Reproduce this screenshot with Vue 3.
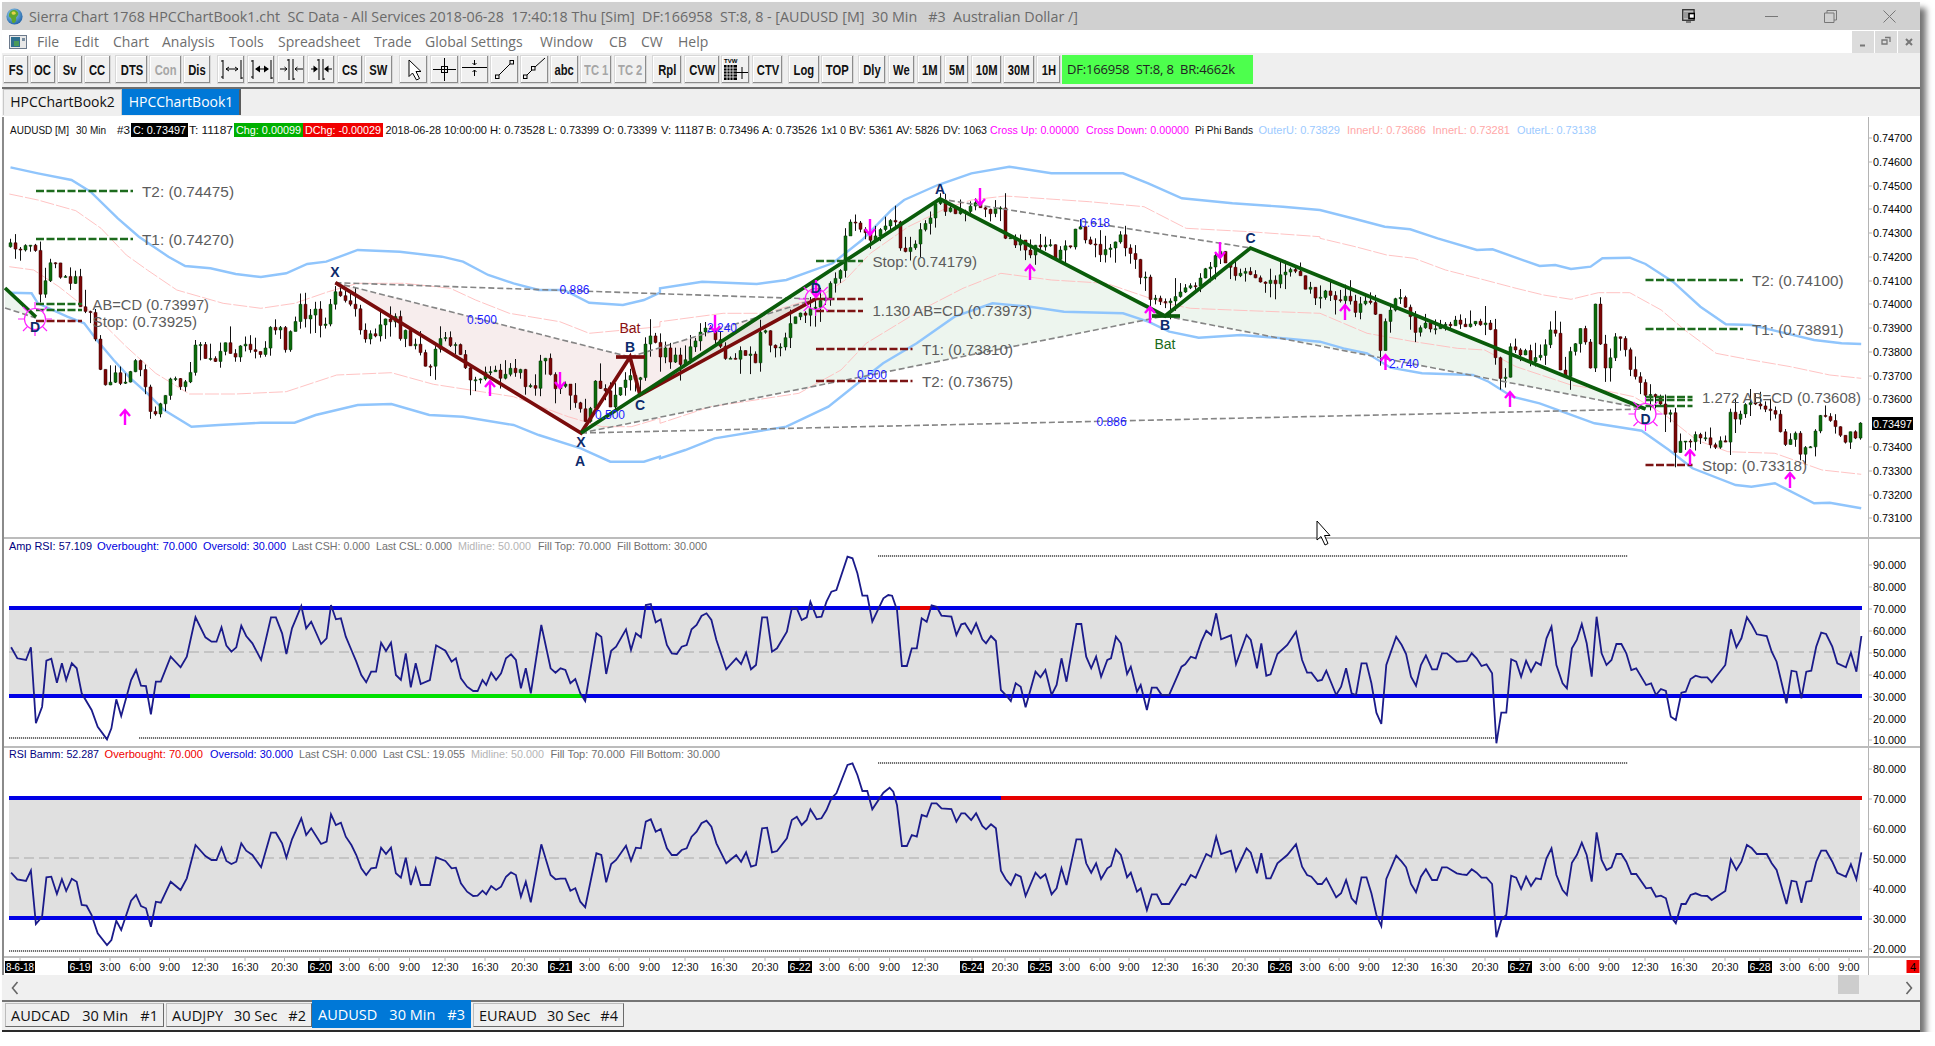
<template>
  <div class="window">
    <div class="titlebar">
      <svg class="globe" viewBox="0 0 16 16">
        <defs>
          <radialGradient id="sea" cx="0.4" cy="0.35" r="0.7">
            <stop offset="0" stop-color="#9fd8f0" />
            <stop offset="1" stop-color="#1c5fa8" />
          </radialGradient>
        </defs>
        <circle cx="8" cy="8" r="7.6" fill="url(#sea)" />
        <path d="M5 2.5C8 1 11 2.5 11.5 5S9 8 9.5 10 8 14.5 6.5 14 6 10 4 9 2.5 4.5 5 2.5Z" fill="#5fa62e" />
        <path d="M6 3.5C7.5 3 9 3.5 9.2 5S7 6.5 6 6 5 4 6 3.5Z" fill="#e6d24a" />
      </svg>
      <span class="title-text">{{ titleText }}</span>
      <div class="sys-buttons">
        <svg class="sys-monitor" viewBox="0 0 13 14">
          <rect x="0.7" y="0.7" width="11.4" height="10.6" fill="#bdbdbd" stroke="#333" stroke-width="1.3" />
          <path d="M3 3V9M5 3V9" stroke="#777" stroke-width="1" />
          <rect x="7" y="4.5" width="5.5" height="5" fill="#fff" stroke="#000" stroke-width="1.6" />
          <path d="M4 13H9" stroke="#444" stroke-width="1.2" />
        </svg>
        <svg class="sys-icon" viewBox="0 0 13 13"><path d="M0 6.5H13" stroke="#777" /></svg>
        <svg class="sys-icon" viewBox="0 0 13 13"><path d="M3 3V.5H12.5V10H10M.5 3H10V12.5H.5Z" fill="none" stroke="#777" /></svg>
        <svg class="sys-icon" viewBox="0 0 13 13"><path d="M.5 .5L12.5 12.5M12.5 .5L.5 12.5" stroke="#777" /></svg>
      </div>
    </div>

    <div class="menubar">
      <svg class="menu-icon" viewBox="0 0 18 14">
        <rect x="0.5" y="0.5" width="17" height="13" fill="#e8e8e8" stroke="#6c7a8c" />
        <rect x="2" y="2" width="9" height="10" fill="#2f6f8f" />
        <rect x="5" y="6" width="5" height="5" fill="#4a9a5a" />
        <rect x="13" y="3" width="3" height="3" fill="#7a8ea0" />
      </svg>
      <span v-for="m in menuItems" :key="m.label" class="menu-item" :style="{ width: m.w + 'px' }">{{ m.label }}</span>
      <div class="mdi-buttons">
        <div class="mdi-btn"><svg viewBox="0 0 22 22" width="22" height="22"><path d="M8 14.5H13" stroke="#777" stroke-width="2" /></svg></div>
        <div class="mdi-btn"><svg viewBox="0 0 22 22" width="22" height="22"><path d="M10 6.5H15V11M7 9H12V13H7Z" fill="none" stroke="#777" stroke-width="1.3" /></svg></div>
        <div class="mdi-btn"><svg viewBox="0 0 22 22" width="22" height="22"><path d="M8 8L14 14M14 8L8 14" stroke="#777" stroke-width="2" /></svg></div>
      </div>
    </div>

    <div class="toolbar">
      <div
        v-for="b in toolButtons"
        :key="b.id"
        class="tool-btn"
        :class="{ dim: b.dim }"
        :style="{ width: b.w + 'px', marginLeft: b.gap + 'px' }"
      >
        <span v-if="b.text" class="tool-label">{{ b.text }}</span>
        <svg v-else class="tool-icon" viewBox="0 0 29 29" width="29" height="29">
          <g v-if="b.icon === 'span'" stroke="#000" fill="none">
            <path d="M6 5V24M24 5V24M4 6H6M24 23H26M4 22H6" />
            <path d="M9 14H21M9 14L12 12M9 14L12 16M21 14L18 12M21 14L18 16" />
          </g>
          <g v-else-if="b.icon === 'spanBold'">
            <path d="M6 5V24M24 5V24M4 6H6M24 23H26M4 22H6M9 14H21" stroke="#000" fill="none" />
            <path d="M8 14L13 10.5V17.5ZM22 14L17 10.5V17.5Z" />
          </g>
          <g v-else-if="b.icon === 'pinch'" stroke="#000" fill="none">
            <path d="M12 4V25M16 4V25M10 5H12M16 24H18" />
            <path d="M3 14H10M10 14L7.5 12M10 14L7.5 16M26 14H18M18 14L20.5 12M18 14L20.5 16" />
          </g>
          <g v-else-if="b.icon === 'pinchBold'">
            <path d="M12 4V25M16 4V25M10 5H12M16 24H18M4 14H10M18 14H25" stroke="#000" fill="none" />
            <path d="M11 14L6.5 10.5V17.5ZM17 14L21.5 10.5V17.5Z" />
          </g>
          <path v-else-if="b.icon === 'pointer'" d="M10 5V21.5L13.5 18L17.5 25L20.5 23.5L17 16.5H22Z" fill="#fff" stroke="#000" />
          <g v-else-if="b.icon === 'cross'" stroke="#000" fill="none">
            <path d="M3 14.5H26M14.5 3V26" />
            <rect x="11.5" y="11.5" width="6" height="6" />
          </g>
          <g v-else-if="b.icon === 'level'" stroke="#000" fill="none">
            <path d="M2 12.5H27" />
            <path d="M14.5 5V10M14.5 10L12.5 8M14.5 10L16.5 8M14.5 21V15M14.5 15L12.5 17M14.5 15L16.5 17" />
          </g>
          <g v-else-if="b.icon === 'line'" stroke="#000" fill="none">
            <path d="M9 20L20 9" />
            <rect x="5.5" y="20" width="3.5" height="3.5" />
            <rect x="20" y="5.5" width="3.5" height="3.5" />
          </g>
          <g v-else-if="b.icon === 'ray'" stroke="#000" fill="none">
            <path d="M7 20L12 15M15 12L25 3" />
            <rect x="3.5" y="20" width="3.5" height="3.5" />
            <rect x="11.5" y="11.5" width="3.5" height="3.5" />
          </g>
          <g v-else-if="b.icon === 'table'">
            <text x="3" y="8" class="tvw">TVW</text>
            <rect x="3" y="10" width="13" height="15" />
            <path d="M3 13H16M3 16H16M3 19H16M3 22H16M6 10V25M9 10V25M12 10V25" stroke="#fff" stroke-width=".8" />
            <path d="M15 17.5H27M21 12V24" stroke="#000" />
          </g>
        </svg>
      </div>
      <div class="status-box">{{ statusText }}</div>
    </div>

    <div class="book-tabs">
      <div class="book-tab">HPCChartBook2</div>
      <div class="book-tab active">HPCChartBook1</div>
    </div>

    <div class="panes">
      <div class="pane">
        <svg class="chart" viewBox="4 117 1916 420" width="1916" height="420">
          <polygon v-for="(f, i) in fills" :key="'f' + i" :points="f.pts" :fill="f.color" />

          <polyline
            v-for="(b, i) in bands"
            :key="'b' + i"
            :points="b.pts"
            fill="none"
            :stroke="b.color"
            :stroke-width="b.width"
            :stroke-dasharray="b.dash"
          />

          <path :d="candles.wicks" stroke="#111" stroke-width="1" fill="none" />
          <path :d="candles.up" fill="#0b6b0b" stroke="#0a3a0a" stroke-width=".5" />
          <path :d="candles.down" fill="#7c0606" stroke="#3a0505" stroke-width=".5" />

          <line
            v-for="(d, i) in ratioLines"
            :key="'d' + i"
            :x1="d[0]" :y1="d[1]" :x2="d[2]" :y2="d[3]"
            stroke="#858585" stroke-width="1.6" stroke-dasharray="6 3"
          />

          <polyline v-for="(l, i) in legs" :key="'l' + i" :points="l.pts" fill="none" :stroke="l.color" stroke-width="3.7" />

          <line
            v-for="(t, i) in targets"
            :key="'t' + i"
            :x1="t[0]" :x2="t[1]" :y1="t[2]" :y2="t[2]"
            :stroke="t[3]" stroke-width="2.6" stroke-dasharray="8 2.5"
          />

          <g v-for="(s, i) in suns" :key="'s' + i" stroke="#ff20ff" stroke-width="1.2" fill="none">
            <circle :cx="s[0]" :cy="s[1]" r="10.5" />
            <path :d="sunRays(s[0], s[1])" />
          </g>

          <path
            v-for="(a, i) in arrows"
            :key="'a' + i"
            :d="arrowPath(a)"
            fill="none" stroke="#ff00ff" stroke-width="2.4"
          />

          <text
            v-for="(p, i) in pointLabels"
            :key="'p' + i"
            :x="p[0]" :y="p[1]"
            class="point-label"
          >{{ p[2] }}</text>
          <text x="630" y="328" class="bat" fill="#8a1010">Bat</text>
          <text x="1165" y="344" class="bat" fill="#1a6a1a">Bat</text>

          <text
            v-for="(r, i) in ratioLabels"
            :key="'r' + i"
            :x="r[0]" :y="r[1]"
            class="ratio-label"
            textLength="30" lengthAdjust="spacingAndGlyphs"
          >{{ r[2] }}</text>

          <text
            v-for="(t, i) in targetLabels"
            :key="'tl' + i"
            :x="t[0]" :y="t[2]"
            class="target-label"
            :textLength="t[1] - t[0]" lengthAdjust="spacingAndGlyphs"
          >{{ t[3] }}</text>

          <g v-for="(h, i) in mainBoxes" :key="'h' + i">
            <rect :x="h[0]" y="123" :width="h[1] - h[0]" height="14" :fill="h[2]" />
          </g>
          <text
            v-for="(h, i) in mainHeader"
            :key="'mh' + i"
            :x="h[0]" y="130"
            class="small-text"
            :fill="h[3] || '#111'"
            :textLength="h[1] - h[0]" lengthAdjust="spacingAndGlyphs"
          >{{ h[2] }}</text>

          <line x1="1868.5" x2="1868.5" y1="117" y2="537" class="axis-line" />
          <g v-for="(p, i) in priceScale" :key="'ps' + i">
            <line x1="1868" x2="1872" :y1="p[0]" :y2="p[0]" class="axis-line" />
            <text x="1873" :y="p[0]" class="small-text" textLength="39" lengthAdjust="spacingAndGlyphs">{{ p[1] }}</text>
          </g>
          <rect x="1872" y="417" width="41" height="13" fill="#000" />
          <text x="1873" y="424" class="small-text" fill="#fff" textLength="39" lengthAdjust="spacingAndGlyphs">0.73497</text>
        </svg>
      </div>

      <div v-for="pane in rsiPanes" :key="pane.id" class="pane">
        <svg class="chart" :viewBox="`4 ${pane.top} 1916 ${pane.height}`" width="1916" :height="pane.height">
          <rect x="9" :y="pane.hi" width="1851" :height="pane.lo - pane.hi" fill="#e0e0e0" />
          <line x1="9" x2="1860" :y1="pane.mid" :y2="pane.mid" stroke="#a8a8a8" stroke-width="1.2" stroke-dasharray="10 5" />
          <line
            v-for="(d, i) in pane.dotted"
            :key="'dot' + i"
            :x1="d[0]" :x2="d[1]" :y1="d[2]" :y2="d[2]"
            stroke="#707070" stroke-width="1.8" stroke-dasharray="1.2 .8"
          />
          <line
            v-for="(s, i) in pane.bars"
            :key="'bar' + i"
            :x1="s[0]" :x2="s[1]" :y1="s[2]" :y2="s[2]"
            :stroke="s[3]" stroke-width="4"
          />
          <polyline :points="pane.curve" fill="none" stroke="#1b1b8a" stroke-width="1.8" />

          <text
            v-for="(h, i) in pane.header"
            :key="'hd' + i"
            :x="h[0]" :y="pane.headY"
            class="small-text"
            :fill="h[3]"
            :textLength="h[1] - h[0]" lengthAdjust="spacingAndGlyphs"
          >{{ h[2] }}</text>

          <line x1="1868.5" x2="1868.5" :y1="pane.top" :y2="pane.top + pane.height" class="axis-line" />
          <g v-for="(p, i) in pane.scale" :key="'sc' + i">
            <line x1="1868" x2="1872" :y1="p[0]" :y2="p[0]" class="axis-line" />
            <text x="1873" :y="p[0]" class="small-text" textLength="33" lengthAdjust="spacingAndGlyphs">{{ p[1] }}</text>
          </g>
        </svg>
      </div>

      <svg class="chart time-axis" viewBox="4 958 1916 17" width="1916" height="17">
        <g v-for="(t, i) in timeLabels" :key="'tm' + i">
          <line :x1="t.x" :x2="t.x" y1="958" y2="961" class="axis-line" />
          <rect v-if="t.date" :x="t.x - t.w / 2" y="961" :width="t.w" height="12" fill="#000" />
          <text
            :x="t.x" y="967"
            class="small-text time-text"
            :fill="t.date ? '#fff' : '#111'"
            :textLength="t.len" lengthAdjust="spacingAndGlyphs"
          >{{ t.label }}</text>
        </g>
        <line x1="1868.5" x2="1868.5" y1="958" y2="975" class="axis-line" />
        <rect x="1906.5" y="960" width="13" height="13" fill="#f00000" />
        <text x="1913" y="967" class="small-text time-text">4</text>
      </svg>

      <svg class="mouse-cursor" viewBox="0 0 15 26" width="15" height="26">
        <path d="M1 1V20L5 16.5L9 25L12 23.5L8.5 15.5H14Z" fill="#fff" stroke="#000" />
      </svg>
    </div>

    <div class="scrollbar">
      <svg viewBox="0 0 8 14" width="8" height="14"><path d="M6.5 1L1.5 7L6.5 13" fill="none" stroke="#666" stroke-width="1.6" /></svg>
      <div class="scroll-thumb"></div>
      <svg viewBox="0 0 8 14" width="8" height="14"><path d="M1.5 1L6.5 7L1.5 13" fill="none" stroke="#666" stroke-width="1.6" /></svg>
    </div>

    <div class="sheet-tabs">
      <div
        v-for="t in sheetTabs"
        :key="t.num"
        class="sheet-tab"
        :class="{ active: t.active }"
        :style="{ width: t.w + 'px', marginLeft: t.gap + 'px' }"
      >
        <span>{{ t.sym }}</span><span>{{ t.period }}</span><span>{{ t.num }}</span>
      </div>
    </div>
  </div>
</template>

<script setup>
const titleText = 'Sierra Chart 1768 HPCChartBook1.cht  SC Data - All Services 2018-06-28  17:40:18 Thu [Sim]  DF:166958  ST:8, 8 - [AUDUSD [M]  30 Min   #3  Australian Dollar /]'
const statusText = 'DF:166958  ST:8, 8  BR:4662k'

// readings below were taken per crop of the screen, so each block has its own scale
const crop = (ox, oy, sx, sy) => (str) =>
  str.trim().split(/\s+/).map((p) => {
    const [x, y] = p.split(',').map(Number)
    return [ox + x / sx, oy + y / sy]
  })
const left = crop(0, 140, 2.376, 3)
const mid = crop(660, 140, 2.376, 3)
const right = crop(1320, 140, 2.55, 3)
const toPts = (arr) => arr.map(([x, y]) => `${x.toFixed(1)},${y.toFixed(1)}`).join(' ')

// ---- top bars
const menuAt = [
  ['File', 37], ['Edit', 74], ['Chart', 113], ['Analysis', 162], ['Tools', 229], ['Spreadsheet', 278],
  ['Trade', 374], ['Global Settings', 425], ['Window', 540], ['CB', 609], ['CW', 641], ['Help', 678], ['', 720],
]
const menuItems = menuAt.slice(0, -1).map(([label, x], i) => ({ label, w: menuAt[i + 1][1] - x }))

const toolAt = [
  ['FS', 3, 29], ['OC', 29.5, 56], ['Sv', 57, 83], ['CC', 84, 111],
  ['DTS', 115, 148], ['Con', 149, 182, 1], ['Dis', 183, 211],
  ['@span', 217, 245], ['@spanBold', 247, 275], ['@pinch', 277, 305], ['@pinchBold', 307, 335],
  ['CS', 337, 363], ['SW', 364, 393],
  ['@pointer', 399, 428], ['@cross', 430, 459], ['@level', 460, 489], ['@line', 490, 519], ['@ray', 520, 549],
  ['abc', 550, 579], ['TC 1', 580, 612, 1], ['TC 2', 614, 647, 1],
  ['Rpl', 652, 682], ['CVW', 684, 720], ['@table', 721, 750], ['CTV', 752, 783],
  ['Log', 788, 820], ['TOP', 821, 854],
  ['Dly', 858, 886], ['We', 888, 915], ['1M', 917, 942], ['5M', 944, 969], ['10M', 971, 1002], ['30M', 1003, 1035], ['1H', 1036, 1061],
]
const toolButtons = toolAt.map(([name, x1, x2, dim], i) => {
  const isIcon = name[0] === '@'
  return {
    id: name,
    text: isIcon ? '' : name,
    icon: isIcon ? name.slice(1) : '',
    dim: !!dim,
    w: x2 - x1,
    gap: i ? x1 - toolAt[i - 1][2] : 1,
  }
})

// ---- price pane
const trace = [
  ...left(`22,320 36,322 48,330 60,328 72,325 84,320 84,500 96,460 107,420 119,375 131,375 143,425 155,400 167,435 179,410 190,430 190,500 203,505 215,530 227,600 238,680 250,740 262,735 274,690 286,740 298,730 310,690 322,670 333,700 345,740 357,830 369,810 381,780 393,760 405,720 417,720 429,750 441,730 453,680 465,600 477,630 489,650 501,650 513,655 525,620 537,615 549,660 560,655 572,605 584,605 596,620 608,635 620,660 631,630 642,570 654,565 666,570 678,625 690,575 702,530 714,500 726,535 738,515 750,515 762,550 774,540 785,480 797,440 808,470 820,480 832,495 845,520 857,570 869,600 880,590 892,585 905,540 917,550 928,535 940,540 952,610 963,560 975,620 987,605 999,650 1011,670 1023,670 1035,620 1047,590 1058,605 1070,610 1082,625 1094,650 1105,690 1118,715 1130,715 1142,705 1153,700 1165,705 1177,700 1188,715 1200,700 1212,685 1223,690 1235,695 1247,745 1258,735 1270,750 1285,650 1296,660 1308,700 1320,750 1332,745 1344,740 1355,770 1367,785 1380,820 1392,840 1403,800 1415,720 1427,760 1439,760 1451,800 1463,750 1475,730 1487,720 1499,700 1510,720 1522,700 1533,610 1545,575 1557,600`),
  ...mid(`0,640 12,620 24,660 36,650 48,670 60,660 72,630 84,610 95,580 107,575 119,570 131,600 143,610 155,650 167,645 180,650 192,640 203,660 215,645 227,660 240,570 250,580 262,620 274,615 286,610 298,590 310,540 322,530 333,525 345,530 357,500 369,490 380,490 393,480 404,440 416,425 428,380 440,290 452,255 464,260 476,270 488,285 500,300 512,290 524,275 535,250 548,240 560,235 572,340 584,320 596,320 608,315 620,270 630,250 640,230 653,195 665,190 678,205 690,205 702,210 714,220 725,205 737,205 749,195 761,205 773,215 785,210 797,205 809,215 809,280 820,305 832,305 844,320 856,305 868,320 880,340 892,320 905,320 916,325 928,320 940,360 952,335 964,320 975,325 987,260 998,255 1010,310 1022,315 1035,320 1047,335 1060,340 1071,330 1083,290 1094,295 1106,330 1118,350 1130,360 1130,410 1141,405 1152,410 1165,490 1177,470 1190,490 1200,500 1212,490 1225,470 1237,450 1249,445 1261,440 1273,430 1285,415 1296,395 1308,390 1320,350 1332,345 1344,375 1355,375 1367,400 1380,400 1392,380 1403,395 1415,420 1427,430 1440,430 1452,425 1462,420 1474,405 1486,400 1498,385 1510,390 1521,400 1533,440 1545,440 1557,465`),
  ...right(`0,460 14,455 27,460 40,480 52,490 65,470 77,490 90,520 102,490 115,490 128,490 140,520 153,630 167,540 178,510 190,480 203,480 215,490 232,530 243,585 255,555 268,540 280,555 292,560 306,550 320,540 332,550 345,548 357,552 370,550 383,548 395,545 408,558 420,560 435,560 447,650 460,730 472,700 485,620 497,630 510,640 522,635 535,665 548,645 562,650 575,620 587,570 600,570 612,700 625,700 638,630 650,610 664,560 676,610 690,700 702,490 714,610 727,680 740,660 753,590 766,590 778,625 790,690 803,700 815,720 830,780 843,765 855,770 868,800 880,820 893,830 893,950 905,935 918,915 931,915 944,900 957,895 970,890 982,895 995,910 1008,915 1020,905 1033,900 1045,820 1058,830 1070,830 1085,790 1097,785 1110,795 1122,800 1135,800 1147,800 1160,830 1172,880 1187,910 1200,890 1212,890 1225,960 1237,925 1250,925 1262,870 1276,835 1288,835 1300,840 1314,860 1326,895 1338,900 1352,880 1365,900 1378,850`),
]

const traceAt = (x) => {
  for (let i = 1; i < trace.length; i++) {
    if (trace[i][0] >= x) {
      const [x0, y0] = trace[i - 1]
      const [x1, y1] = trace[i]
      return x1 === x0 ? y1 : y0 + ((y1 - y0) * (x - x0)) / (x1 - x0)
    }
  }
  return trace[trace.length - 1][1]
}

let seed = 17
const rnd = () => {
  seed = (seed * 16807) % 2147483647
  return seed / 2147483647
}

const buildCandles = () => {
  let wicks = ''
  let up = ''
  let down = ''
  let prev = traceAt(10)
  for (let x = 10; x <= 1860; x += 5) {
    const close = traceAt(x) + (rnd() - 0.5) * 8
    const top = Math.min(prev, close)
    const bot = Math.max(prev, close)
    const px = Math.round(x) + 0.5
    wicks += `M${px} ${(top - rnd() * rnd() * 20).toFixed(1)}V${(bot + rnd() * rnd() * 20).toFixed(1)}`
    const body = `M${px - 1.5} ${top.toFixed(1)}h3v${Math.max(bot - top, 1).toFixed(1)}h-3Z`
    if (close < prev) up += body
    else down += body
    prev = close
  }
  return { wicks, up, down }
}
const candles = buildCandles()

const bands = [
  {
    color: '#90c5fc', width: 2.4,
    pts: toPts([
      ...left(`25,82 90,100 170,120 215,155 280,235 330,290 400,350 440,378 500,385 560,402 620,411 680,400 730,372 775,365 850,330 950,335 1050,350 1100,365 1160,405 1220,430 1280,450 1340,450 1400,488 1480,495 1530,480 1568,458`),
      ...mid(`0,445 100,425 230,432 300,420 410,370 480,300 550,210 580,180 660,135 740,100 830,80 930,100 1100,100 1160,130 1240,175 1360,190 1480,200 1568,210`),
      ...right(`0,210 90,237 165,260 230,268 300,295 400,330 440,328 560,378 600,375 640,387 690,380 720,355 790,353 830,372 900,425 970,500 1035,553 1100,555 1170,575 1260,600 1330,610 1380,612`),
    ]),
  },
  {
    color: '#90c5fc', width: 2.4,
    pts: toPts([
      ...left(`22,458 75,460 90,490 160,530 200,550 230,600 270,660 310,715 350,760 390,810 455,860 520,855 620,848 700,848 750,825 850,795 930,792 1020,825 1100,830 1220,855 1280,885 1380,925 1450,965 1530,965 1568,950`),
      ...mid(`0,955 60,930 130,895 300,860 400,800 470,730 530,670 610,610 700,530 790,490 880,500 960,515 1100,520 1160,545 1210,575 1280,593 1380,585 1480,595 1568,605`),
      ...right(`0,605 60,625 120,640 180,683 260,700 390,705 430,725 490,770 560,790 630,820 700,850 820,872 890,930 950,985 1060,1035 1100,1040 1160,1030 1260,1090 1300,1088 1380,1105`),
    ]),
  },
  {
    color: '#ffbcbc', width: 0.9, dash: '14 2',
    pts: toPts([
      ...left(`22,162 90,180 180,212 240,265 300,345 350,390 420,450 530,490 620,505 700,490 780,455 850,430 960,430 1070,445 1130,480 1210,520 1330,545 1400,580 1568,560`),
      ...mid(`0,545 150,520 250,520 380,470 440,420 500,340 590,260 680,205 740,180 820,168 1020,185 1150,200 1250,265 1400,275 1568,290`),
      ...right(`0,295 90,320 170,345 240,355 320,390 420,420 500,445 570,465 640,478 710,458 790,458 870,510 930,570 1010,640 1090,658 1200,680 1300,705 1380,715`),
    ]),
  },
  {
    color: '#ffbcbc', width: 0.9, dash: '14 2',
    pts: toPts([
      ...left(`22,380 80,390 140,440 220,520 300,620 370,700 450,762 560,762 680,755 800,705 930,698 1030,733 1220,770 1350,830 1430,860 1500,860 1568,835`),
      ...mid(`0,850 120,800 200,785 330,760 430,690 490,610 620,510 720,445 810,400 930,420 1060,430 1200,490 1260,505 1400,512 1568,520`),
      ...right(`0,520 120,580 240,605 350,625 420,630 500,680 640,735 720,750 800,770 880,825 960,900 1040,935 1160,940 1280,990 1380,1003`),
    ]),
  },
]

const RX = [335.4, 282.7]
const RA = [581, 433]
const RB = [630, 357]
const RC = [640, 395]
const RD = [815.7, 299]
const GX = [581, 433]
const GA = [940, 199]
const GB = [1165, 316]
const GC = [1250.5, 248]
const GD = [1645.5, 409]

const fills = [
  { pts: toPts([RX, RA, RB]), color: 'rgba(170,60,60,.09)' },
  { pts: toPts([RB, RC, RD]), color: 'rgba(170,60,60,.09)' },
  { pts: toPts([GX, GA, GB]), color: 'rgba(60,140,70,.09)' },
  { pts: toPts([GB, GC, GD]), color: 'rgba(60,140,70,.09)' },
  { pts: toPts([[5, 288], [36, 317], [5, 308]]), color: 'rgba(60,140,70,.09)' },
]

const ratioLines = [
  [...RX, ...RB], [...RX, ...RD], [...RA, ...RC], [...RB, ...RD],
  [...GX, ...GB], [...GX, ...GD], [...GA, ...GC], [...GB, ...GD],
  [5, 308, 36, 318],
]

const legs = [
  { color: '#7a0c0c', pts: toPts([RX, RA, RB, RC, RD]) },
  { color: '#0a5c0a', pts: toPts([GX, GA, GB, GC, GD]) },
  { color: '#0a5c0a', pts: toPts([[5, 288], [36, 317]]) },
  { color: '#7a0c0c', pts: toPts([[616, 357], [645, 357]]) },
  { color: '#0a5c0a', pts: toPts([[1152, 316], [1180, 316]]) },
]

const G = '#1d6b1d'
const R = '#7c1414'
const targets = [
  [36, 133, 191, G], [36, 133, 239, G], [36, 82, 304, G], [36, 82, 310, G], [36, 82, 321, R],
  [816, 863, 261, G], [816, 863, 299, R], [816, 863, 311, R], [816, 912.5, 349, R], [816, 912.5, 381, R],
  [1645.5, 1743, 280, G], [1645.5, 1743, 329, G], [1645.5, 1692.5, 397, G], [1645.5, 1692.5, 400, G], [1645.5, 1692.5, 406, G], [1645.5, 1692.5, 465, R],
]

const targetLabels = [
  [142, 234, 191, 'T2: (0.74475)'], [142, 234, 239, 'T1: (0.74270)'],
  [92.6, 209, 304, 'AB=CD (0.73997)'], [92.6, 197, 321, 'Stop: (0.73925)'],
  [872.5, 977, 261, 'Stop: (0.74179)'], [872.5, 1032, 310, '1.130 AB=CD (0.73973)'],
  [922, 1013, 349, 'T1: (0.73810)'], [922, 1013, 381, 'T2: (0.73675)'],
  [1752, 1843.5, 280, 'T2: (0.74100)'], [1752, 1843.5, 329, 'T1: (0.73891)'],
  [1702, 1861, 397, '1.272 AB=CD (0.73608)'], [1702, 1807, 465, 'Stop: (0.73318)'],
]

const suns = [[35, 319], [815.7, 299], [1645.5, 414]]

const sunRays = (cx, cy) => {
  let d = ''
  for (let i = 0; i < 8; i++) {
    const a = (i * Math.PI) / 4
    const c = Math.cos(a)
    const s = Math.sin(a)
    d += `M${(cx + c * 10).toFixed(1)} ${(cy + s * 10).toFixed(1)}L${(cx + c * 17).toFixed(1)} ${(cy + s * 17).toFixed(1)}`
  }
  return d
}

// [x, top y, bottom y, points up]
const arrows = [
  [125, 410, 425, 1], [490, 381, 396, 1], [560, 372, 388, 0],
  [870, 219, 235, 0], [715, 315, 332, 0], [816, 280, 297, 0], [980, 188, 205, 0],
  [1030, 265, 280, 1], [1150, 307, 323, 1], [1220, 242, 258, 0],
  [1345, 305, 320, 1], [1385.5, 355, 370, 1], [1510, 392, 407, 1], [1690, 450, 465, 1], [1790, 473, 488, 1],
]
const arrowPath = ([x, y1, y2, up]) =>
  up
    ? `M${x} ${y2}V${y1}M${x - 5} ${y1 + 6}L${x} ${y1}L${x + 5} ${y1 + 6}`
    : `M${x} ${y1}V${y2}M${x - 5} ${y2 - 6}L${x} ${y2}L${x + 5} ${y2 - 6}`

const pointLabels = [
  [35, 327, 'D'], [335, 272, 'X'], [581, 442, 'X'], [580, 461, 'A'], [630, 347, 'B'], [640, 405, 'C'],
  [815.7, 288, 'D'], [940, 189, 'A'], [1165, 325, 'B'], [1250.5, 238, 'C'], [1645.5, 419, 'D'],
]

const ratioLabels = [
  [574.5, 290, '0.886'], [482, 320, '0.500'], [610, 415, '0.500'], [722, 328, '2.240'],
  [872, 375, '0.500'], [1095, 223, '0.618'], [1111.6, 422, '0.886'], [1404, 364, '2.740'],
]

const mainBoxes = [
  [131, 188, '#000'], [234, 303, '#00b000'], [303, 383, '#f00000'],
]
const mainHeader = [
  [10, 69, 'AUDUSD [M]'], [76, 106, '30 Min'], [117, 130, '#3'],
  [133, 186, 'C: 0.73497', '#fff'], [189, 233, 'T: 11187'],
  [236, 301, 'Chg: 0.00099', '#fff'], [305, 381, 'DChg: -0.00029', '#fff'],
  [385.5, 441, '2018-06-28'], [444, 487, '10:00:00'], [490, 545, 'H: 0.73528'], [548, 599, 'L: 0.73399'],
  [603, 657, 'O: 0.73399'], [661, 704, 'V: 11187'], [706, 759, 'B: 0.73496'], [762, 817, 'A: 0.73526'],
  [821, 846, '1x1 0'], [849, 893, 'BV: 5361'], [896, 939, 'AV: 5826'], [943, 987, 'DV: 1063'],
  [990, 1079, 'Cross Up: 0.00000', '#ff00ff'], [1086, 1189, 'Cross Down: 0.00000', '#ff00ff'],
  [1195, 1253, 'Pi Phi Bands'],
  [1258.5, 1340, 'OuterU: 0.73829', '#9ccaff'], [1347, 1426, 'InnerU: 0.73686', '#ffa8a8'],
  [1432.5, 1510, 'InnerL: 0.73281', '#ffa8a8'], [1517, 1596, 'OuterL: 0.73138', '#9ccaff'],
]

const priceScale = [
  [138, '0.74700'], [162, '0.74600'], [186, '0.74500'], [209, '0.74400'], [233, '0.74300'], [257, '0.74200'],
  [281, '0.74100'], [304, '0.74000'], [328, '0.73900'], [352, '0.73800'], [376, '0.73700'], [399, '0.73600'],
  [447, '0.73400'], [471, '0.73300'], [495, '0.73200'], [518, '0.73100'],
]

// ---- oscillator panes
const rsiCrop = (ox, oy) => crop(ox, oy, 1.6165, 3)

const ampCurve = [
  ...rsiCrop(0, 530)(`18,352 28,385 42,390 50,352 58,580 68,530 75,392 83,386 92,458 100,400 107,450 116,400 124,415 132,490 148,540 158,590 173,628 180,595 188,508 196,558 212,450 220,420 228,467 236,468 244,553 252,455 260,455 276,380 292,412 302,380 316,262 332,322 342,335 350,335 358,292 366,347 374,365 382,352 390,287 398,318 408,340 422,390 438,262 446,262 456,310 463,372 472,295 487,228 495,295 503,275 519,342 528,325 535,225 543,268 551,265 559,320 568,360 576,395 584,435 592,457 600,425 608,425 616,338 624,363 632,338 640,435 648,450 656,370 664,472 672,400 680,462 695,450 705,346 720,362 730,395 737,385 745,445 755,470 765,483 772,483 780,450 786,465 794,428 802,450 810,430 818,385 826,373 834,390 842,475 850,415 858,490 875,285 890,415 898,428 906,415 914,420 922,460 930,447 938,490 946,513 964,310 972,320 980,432 988,362 996,350 1012,298 1020,360 1028,310 1036,322 1044,225 1052,222 1060,277 1068,268 1078,345 1086,370 1094,372 1102,350 1110,345 1118,298 1126,285 1134,258 1142,250 1150,270 1158,330 1174,418 1190,385 1198,402 1206,368 1214,418 1222,405 1232,262 1240,262 1248,365 1256,355 1272,305 1280,235 1288,235 1296,270 1304,262 1310,215 1320,262 1328,260 1336,215 1344,185 1352,180 1370,80 1378,85 1386,130 1394,197 1402,197 1410,275 1428,205 1436,195 1442,197 1450,240 1458,408 1466,408 1474,355 1482,355 1490,265 1498,275 1506,226 1514,230 1522,257 1538,260 1546,315 1554,283`),
  ...rsiCrop(965, 530)(`0,280 10,310 18,280 28,328 34,340 42,318 50,333 58,480 66,495 74,513 82,460 90,470 98,532 114,425 122,442 130,420 140,495 148,465 156,385 164,455 180,282 188,282 196,380 204,415 212,380 220,440 230,390 236,385 244,320 252,340 262,432 268,410 278,485 284,465 294,540 302,473 310,473 318,495 330,495 350,410 356,403 365,380 373,385 382,335 390,302 398,315 406,250 414,328 430,316 438,403 455,315 462,330 472,415 479,340 487,437 494,433 505,372 521,345 535,305 545,390 553,428 560,428 570,453 577,450 584,422 600,495 608,470 616,415 625,490 632,495 641,400 649,400 657,460 665,548 673,582 681,405 697,320 706,345 713,372 721,440 729,467 737,405 745,376 755,418 763,418 771,370 779,370 795,395 803,394 811,393 819,370 827,385 835,408 843,403 852,430 859,640 867,548 875,548 883,388 891,395 899,440 907,392 915,425 923,397 931,405 940,325 948,290 956,405 966,460 973,475 981,355 989,330 997,282 1005,340 1013,440 1021,260 1029,370 1037,405 1045,390 1053,342 1061,342 1069,370 1077,420 1085,415 1101,465 1109,460 1117,495 1125,477 1133,483 1141,560 1149,570 1158,488 1165,485 1173,447 1181,437 1190,442 1200,442 1207,457 1229,405 1238,298 1247,352 1255,325 1264,262 1272,285 1280,313 1296,318 1304,365 1312,395 1328,520 1336,422 1344,425 1352,505 1360,425 1368,422 1376,350 1384,308 1392,312 1402,350 1410,400 1424,412 1432,368 1441,425 1449,318`),
]

const bammCurve = [
  ...rsiCrop(0, 780)(`18,278 28,298 42,303 50,272 58,432 68,410 75,292 83,290 92,342 100,298 107,333 116,296 124,305 132,375 140,377 148,405 158,460 173,495 180,480 188,422 196,450 212,362 220,345 228,378 236,385 244,440 252,365 260,368 276,305 292,330 302,295 316,195 332,228 342,240 350,240 358,203 366,243 374,252 382,245 390,190 398,212 408,225 422,262 438,158 446,158 456,190 463,233 472,178 487,115 495,165 503,145 519,192 528,185 535,103 543,135 551,128 559,170 568,195 576,225 584,265 592,285 600,265 608,263 616,203 624,222 632,203 640,280 648,293 656,233 664,315 672,265 680,315 695,315 705,232 720,243 730,265 737,263 745,310 755,335 765,348 772,347 780,332 786,343 794,318 802,330 810,320 818,290 826,277 834,285 842,350 850,305 858,367 875,193 890,285 898,298 906,296 914,296 922,332 930,325 938,365 946,382 964,220 972,225 980,307 988,252 996,240 1012,197 1020,242 1028,203 1036,205 1044,125 1052,118 1060,155 1068,147 1078,205 1086,225 1094,225 1102,210 1110,205 1118,170 1126,155 1134,130 1142,122 1150,140 1158,190 1174,250 1190,225 1198,245 1206,217 1214,260 1222,255 1232,145 1240,143 1248,217 1256,213 1272,175 1280,120 1288,110 1296,135 1304,120 1310,88 1320,118 1328,115 1336,90 1344,55 1352,40 1370,-45 1378,-50 1386,-15 1394,33 1402,33 1410,88 1428,38 1438,23 1444,35 1450,75 1458,198 1466,198 1474,165 1482,170 1490,105 1498,110 1506,70 1514,70 1522,85 1538,87 1546,125 1554,100`),
  ...rsiCrop(965, 780)(`0,100 10,120 18,100 28,138 34,148 42,133 50,145 58,272 66,298 74,315 82,283 90,290 98,348 114,278 122,295 130,283 140,343 148,325 156,265 164,315 180,178 188,178 196,250 204,278 212,250 220,297 230,265 236,258 244,208 252,225 262,292 268,278 278,335 284,325 294,390 302,343 310,343 318,372 330,372 350,312 356,315 365,285 373,293 382,255 390,222 398,230 406,170 414,222 430,212 438,273 455,205 462,218 472,280 479,220 487,295 494,295 505,250 521,225 535,193 545,260 553,285 560,290 570,312 577,312 584,295 600,352 608,340 616,300 625,355 632,370 641,292 649,292 657,340 665,405 673,438 681,297 697,227 706,245 713,262 721,312 729,337 737,290 745,268 755,300 763,300 771,262 779,262 795,280 803,283 811,285 819,268 827,278 835,293 843,293 852,312 859,472 867,420 875,405 883,287 891,293 899,327 907,290 915,318 923,295 931,298 940,235 948,205 956,285 966,330 973,345 981,248 989,225 997,188 1005,225 1013,305 1021,157 1029,240 1037,270 1045,262 1053,222 1061,222 1069,245 1077,282 1085,282 1101,325 1109,323 1117,350 1125,347 1133,355 1141,410 1149,430 1158,372 1165,372 1173,345 1181,340 1190,347 1200,348 1207,360 1229,333 1238,238 1247,270 1255,245 1264,195 1272,205 1280,222 1296,222 1304,250 1312,270 1328,372 1336,302 1344,305 1352,368 1360,305 1368,303 1376,245 1384,212 1392,212 1402,245 1410,278 1424,290 1432,253 1441,298 1449,217`),
]

const NAVY = '#000080'
const BLUE = '#0000e0'
const GREY = '#707070'
const PALE = '#b4b4b4'

const rsiPanes = [
  {
    id: 'amp', top: 539, height: 207, hi: 608, lo: 696, mid: 652, headY: 546,
    curve: toPts(ampCurve),
    dotted: [[878, 1628, 556], [9, 108, 738], [139, 1497, 738]],
    bars: [
      [9, 1862, 608, '#0000e6'], [900, 931, 608, '#e60000'],
      [9, 1862, 696, '#0000e6'], [190, 582, 696, '#00e000'],
    ],
    header: [
      [9, 92, 'Amp RSI: 57.109', NAVY], [97, 197, 'Overbought: 70.000', BLUE], [203, 286, 'Oversold: 30.000', BLUE],
      [292, 370, 'Last CSH: 0.000', GREY], [376, 452, 'Last CSL: 0.000', GREY], [458, 531, 'Midline: 50.000', PALE],
      [538, 611, 'Fill Top: 70.000', GREY], [617, 707, 'Fill Bottom: 30.000', GREY],
    ],
    scale: [[565, '90.000'], [587, '80.000'], [609, '70.000'], [631, '60.000'], [653, '50.000'], [675, '40.000'], [697, '30.000'], [719, '20.000'], [740, '10.000']],
  },
  {
    id: 'bamm', top: 748, height: 208, hi: 798, lo: 918, mid: 858, headY: 754,
    curve: toPts(bammCurve),
    dotted: [[878, 1628, 763], [9, 1862, 951]],
    bars: [
      [9, 1001, 798, '#0000e6'], [1001, 1862, 798, '#e60000'],
      [9, 1862, 918, '#0000e6'],
    ],
    header: [
      [9, 99, 'RSI Bamm: 52.287', NAVY], [104.5, 203, 'Overbought: 70.000', '#f00000'], [210, 293, 'Oversold: 30.000', BLUE],
      [299, 377, 'Last CSH: 0.000', GREY], [383, 465, 'Last CSL: 19.055', GREY], [471, 544, 'Midline: 50.000', PALE],
      [550.5, 625, 'Fill Top: 70.000', GREY], [630, 720, 'Fill Bottom: 30.000', GREY],
    ],
    scale: [[769, '80.000'], [799, '70.000'], [829, '60.000'], [859, '50.000'], [889, '40.000'], [919, '30.000'], [949, '20.000']],
  },
]

// ---- time axis
const timeAt = [
  [20, '8-6-18'], [80, '6-19'], [110, '3:00'], [140, '6:00'], [169.5, '9:00'], [205, '12:30'], [245, '16:30'], [284.5, '20:30'],
  [320, '6-20'], [349.5, '3:00'], [379, '6:00'], [409.5, '9:00'], [445, '12:30'], [485, '16:30'], [524.6, '20:30'],
  [560, '6-21'], [589.5, '3:00'], [619, '6:00'], [649.5, '9:00'], [685, '12:30'], [724, '16:30'], [765, '20:30'],
  [800, '6-22'], [829.6, '3:00'], [859, '6:00'], [889.6, '9:00'], [925, '12:30'], [972, '6-24'], [1005, '20:30'],
  [1040, '6-25'], [1069.5, '3:00'], [1100, '6:00'], [1129, '9:00'], [1165, '12:30'], [1205, '16:30'], [1245, '20:30'],
  [1280, '6-26'], [1310, '3:00'], [1339, '6:00'], [1369, '9:00'], [1405, '12:30'], [1444, '16:30'], [1485, '20:30'],
  [1520, '6-27'], [1550, '3:00'], [1579, '6:00'], [1609, '9:00'], [1645, '12:30'], [1684, '16:30'], [1725, '20:30'],
  [1760, '6-28'], [1790, '3:00'], [1819, '6:00'], [1849, '9:00'],
]
const timeLabels = timeAt.map(([x, label]) => {
  const date = label.includes('-')
  const first = label === '8-6-18'
  return {
    x, label, date,
    w: first ? 30 : 24,
    len: first ? 28 : date ? 21 : label.length > 4 ? 27 : 21,
  }
})

// ---- bottom sheet tabs
const sheetTabs = [
  { sym: 'AUDCAD', period: '30 Min', num: '#1', w: 159, gap: 3 },
  { sym: 'AUDJPY', period: '30 Sec', num: '#2', w: 146, gap: 2 },
  { sym: 'AUDUSD', period: '30 Min', num: '#3', w: 159, gap: 0, active: true },
  { sym: 'EURAUD', period: '30 Sec', num: '#4', w: 151, gap: 2 },
]
</script>

<style scoped>
.window {
  width: 1918px;
  height: 1030px;
  margin: 2px 0 0 2px;
  display: flex;
  flex-direction: column;
  background: #efefef;
  box-shadow: 6px 6px 6px rgba(0, 0, 0, 0.55);
  font-family: "Open Sans", "Liberation Sans", sans-serif;
  overflow: hidden;
}

.titlebar {
  height: 28px;
  flex: none;
  background: #d0d0d0;
  display: flex;
  align-items: center;
  color: #6a6a6a;
  font-size: 14.3px;
}
.globe {
  width: 17px;
  height: 17px;
  margin-left: 4px;
  margin-right: 6px;
}
.title-text {
  white-space: pre;
}
.sys-buttons {
  margin-left: auto;
  padding-right: 24px;
  display: flex;
  align-items: center;
  gap: 46px;
}
.sys-monitor {
  width: 13px;
  height: 14px;
  margin-right: 24px;
}
.sys-icon {
  width: 13px;
  height: 13px;
}

.menubar {
  height: 23px;
  flex: none;
  background: #fff;
  display: flex;
  align-items: center;
  color: #6e6e6e;
  font-size: 14px;
  white-space: nowrap;
}
.menu-icon {
  width: 18px;
  height: 14px;
  margin: 0 10px 0 7px;
}
.menu-item {
  flex: none;
}
.mdi-buttons {
  margin-left: auto;
  display: flex;
  gap: 1px;
  align-self: stretch;
  padding-top: 1px;
}
.mdi-btn {
  width: 22px;
  background: #dcdcdc;
}

.toolbar {
  height: 36px;
  flex: none;
  box-sizing: border-box;
  background: #efefef;
  border-bottom: 2px solid #6e6e6e;
  padding-top: 2px;
  display: flex;
  align-items: flex-start;
}
.tool-btn {
  height: 29px;
  box-sizing: border-box;
  flex: none;
  display: flex;
  align-items: center;
  justify-content: center;
  overflow: hidden;
  background: #f0f0f0;
  border: 1px solid #d8d8d8;
  box-shadow: inset -1px -1px 0 #8c8c8c, inset 1px 1px 0 #fff;
  color: #111;
}
.tool-btn.dim {
  color: #a6a6a6;
}
.tool-label {
  font-family: "Liberation Sans", Arial, sans-serif;
  font-weight: 700;
  font-size: 14px;
  white-space: nowrap;
  transform: scaleX(0.8);
}
.tool-icon {
  flex: none;
}
.tvw {
  font-family: "Liberation Sans", Arial, sans-serif;
  font-size: 6px;
  font-weight: 700;
}
.status-box {
  flex: none;
  width: 191px;
  height: 29px;
  margin-left: 1px;
  box-sizing: border-box;
  padding-left: 5px;
  background: #4dff4d;
  color: #222;
  font-size: 13px;
  letter-spacing: -0.2px;
  line-height: 29px;
  white-space: pre;
}

.book-tabs {
  height: 28px;
  flex: none;
  box-sizing: border-box;
  background: #efefef;
  display: flex;
  align-items: flex-end;
  padding-left: 1px;
  padding-bottom: 1px;
  border-bottom: 1px solid #fff;
}
.book-tab {
  width: 119px;
  height: 26px;
  box-sizing: border-box;
  text-align: center;
  font-size: 14px;
  line-height: 24px;
  color: #111;
  border: 1px solid #c8c8c8;
  border-bottom: none;
}
.book-tab.active {
  background: #0078d7;
  color: #fff;
  border-color: #0078d7;
  border-right: 2px solid #5a5a5a;
}

.panes {
  position: relative;
  flex: none;
  background: #fff;
  border-left: 2px solid #8a8a8a;
}
.pane {
  border-bottom: 2px solid #bcbcbc;
}
.chart {
  display: block;
}
.time-axis {
  background: #fff;
}
.mouse-cursor {
  position: absolute;
  left: 1312px;
  top: 403px;
}

.small-text {
  font-family: "Liberation Sans", Arial, sans-serif;
  font-size: 11px;
  dominant-baseline: central;
}
.time-text {
  text-anchor: middle;
}
.axis-line {
  stroke: #b4b4b4;
  stroke-width: 1;
}
.target-label {
  font-family: "Liberation Sans", Arial, sans-serif;
  font-size: 15px;
  fill: #5c5c5c;
  dominant-baseline: central;
}
.ratio-label {
  font-family: "Liberation Sans", Arial, sans-serif;
  font-size: 12px;
  fill: #1c1cff;
  text-anchor: middle;
  dominant-baseline: central;
}
.point-label {
  font-family: "Liberation Sans", Arial, sans-serif;
  font-size: 14px;
  font-weight: 700;
  fill: #0d2a6b;
  text-anchor: middle;
  dominant-baseline: central;
}
.bat {
  font-family: "Liberation Sans", Arial, sans-serif;
  font-size: 14px;
  text-anchor: middle;
  dominant-baseline: central;
}

.scrollbar {
  height: 25px;
  flex: none;
  background: #f0f0f0;
  display: flex;
  align-items: center;
  padding-left: 9px;
  padding-right: 7px;
}
.scroll-thumb {
  width: 21px;
  height: 19px;
  align-self: flex-start;
  margin-left: auto;
  margin-right: 46px;
  background: #cdcdcd;
}

.sheet-tabs {
  flex: 1;
  display: flex;
  align-items: flex-start;
  box-sizing: border-box;
  padding-top: 1px;
  border-top: 2px solid #757575;
  border-bottom: 2px solid #2a2a2a;
  background: #efefef;
}
.sheet-tab {
  height: 24px;
  box-sizing: border-box;
  flex: none;
  display: flex;
  justify-content: space-between;
  align-items: center;
  padding: 0 5px;
  font-size: 14.5px;
  color: #111;
  white-space: nowrap;
  border: 1px solid #bcbcbc;
  border-right-color: #6a6a6a;
  border-bottom-color: #6a6a6a;
}
.sheet-tab.active {
  height: 28px;
  margin-top: -3px;
  background: #0078d7;
  border-color: #0078d7;
  color: #fff;
}
</style>

<style>
html,
body {
  background: #fff;
  overflow: hidden;
}
</style>
